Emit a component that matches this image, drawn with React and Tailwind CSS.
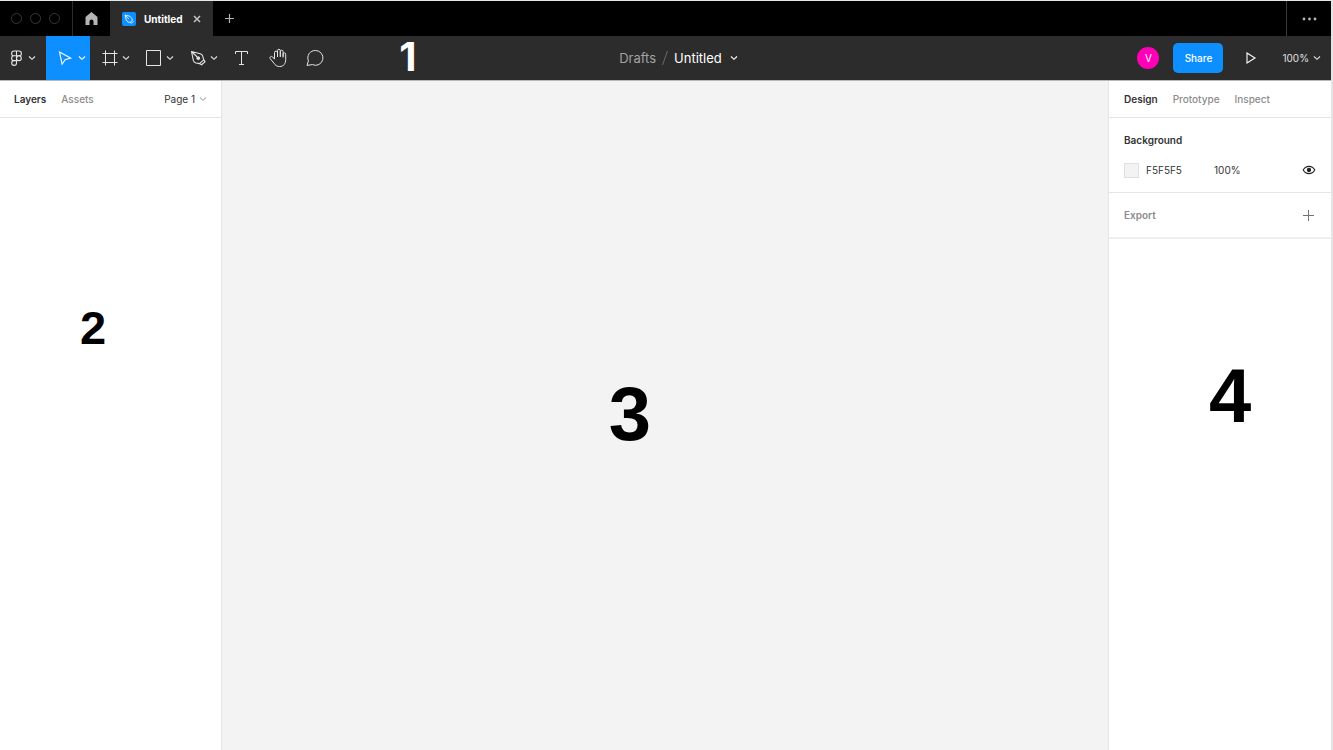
import React from "react";

function Chevron({ className = "" }) {
  return (
    <svg width="8" height="8" viewBox="0 0 8 8" fill="none" stroke="currentColor" strokeWidth="1.1" className={"shrink-0 " + className} aria-hidden="true">
      <path d="M1 2.500 4 5.300 7 2.500" />
    </svg>
  );
}

function Icon({ children }) {
  return (
    <svg width="20" height="20" viewBox="0 0 20 20" fill="none" stroke="currentColor" strokeWidth="1" strokeLinejoin="round" className="shrink-0" aria-hidden="true">
      {children}
    </svg>
  );
}

const icons = {
  figma: (
    <Icon>
      <path d="M10.500 3H8a2.400 2.400 0 0 0 0 4.800h2.500zM10.500 3H13a2.400 2.400 0 0 1 0 4.800h-2.500zM10.500 7.800H8a2.400 2.400 0 0 0 0 4.800h2.500zM10.500 12.600H8a2.400 2.400 0 1 0 2.500 2.400z" strokeWidth="1.100" />
      <circle cx="12.900" cy="10.200" r="2.400" strokeWidth="1.100" />
    </Icon>
  ),
  move: (
    <Icon>
      <path d="m4.500 4 11.200 6-5.600 1.600-3 4.600z" strokeWidth="1.100" strokeLinejoin="miter" />
    </Icon>
  ),
  frame: (
    <Icon>
      <path d="M6.500 2.500v15M15.500 2.500v15M3.500 5.500h15M3.500 14.500h15" />
    </Icon>
  ),
  rectangle: (
    <Icon>
      <path d="M3.500 2.500h14v15h-14z" strokeLinejoin="miter" />
    </Icon>
  ),
  pen: (
    <Icon>
      <path d="m4.500 3.500 8.700 2.300c1.500.4 2.300 1.300 2.600 2.600l.9 3.400-4.200 3.800-3.600-.6c-1.300-.3-2.100-1.100-2.500-2.300zM4.500 3.500l5.700 5.500" strokeWidth="1.100" />
      <path d="m16.700 11.800 1.400 1.800-3.500 3.200-2.100-1.200" strokeWidth="1.200" />
      <circle cx="11.300" cy="10.200" r="1.400" fill="currentColor" />
    </Icon>
  ),
  text: (
    <Icon>
      <path d="M4.500 6V3.500h12V6M10.500 3.500v13M8 16.500h5" />
    </Icon>
  ),
  hand: (
    <Icon>
      <path d="M6.500 11V4.600a1.500 1.500 0 0 1 3 0V9M9.500 8.500V2.700a1.400 1.400 0 0 1 2.800 0V9M12.300 8.500V3.600a1.400 1.400 0 0 1 2.800 0V9.500M15.100 8.500V6.200a1.300 1.300 0 0 1 2.600 0v5.300c0 4.300-2.200 7-6 7-2.800 0-4.400-1.100-5.800-3.400l-3.700-4.400c-.6-.9-.2-1.800.5-2.100.8-.4 1.500-.1 2 .4L6.500 11.200" />
    </Icon>
  ),
  comment: (
    <Icon>
      <path d="M10.500 2.500a7.400 7.400 0 1 1-3.100 14.100l-5.400.8 1.400-4.600A7.400 7.400 0 0 1 10.500 2.500z" strokeLinejoin="miter" />
    </Icon>
  ),
};

function Tool({ icon, label, active }) {
  return (
    <button
      type="button"
      aria-label={label}
      aria-pressed={active}
      className={
        "flex h-full w-11 items-center gap-[3px] pl-[9px] " +
        (active ? "bg-[#0d8fff] text-white" : "text-[#e5e5e5]")
      }
    >
      {icons[icon]}
      <Chevron />
    </button>
  );
}

function PlainTool({ icon, label }) {
  return (
    <button type="button" aria-label={label} className="flex h-full w-[37px] items-center justify-center text-[#e5e5e5]">
      {icons[icon]}
    </button>
  );
}

function TitleBar() {
  return (
    <header className="flex h-[35px] bg-black text-[#b5b5b5]">
      <div className="flex w-[73px] items-center gap-2 border-r border-[#2c2c2c] pl-[11px]">
        <span className="size-[11px] rounded-full border border-[#383838]" />
        <span className="size-[11px] rounded-full border border-[#383838]" />
        <span className="size-[11px] rounded-full border border-[#383838]" />
      </div>
      <button type="button" aria-label="Home" className="flex w-[37px] items-center justify-center">
        <svg width="13" height="13" viewBox="0 0 13 13" fill="currentColor" aria-hidden="true">
          <path d="M6.500 0 12.500 5v8H8.500V9.500a2 2 0 0 0-4 0V13h-4V5z" />
        </svg>
      </button>
      <div className="flex w-[103px] items-center bg-[#2c2c2c] pl-3 text-white">
        <svg width="14" height="14" viewBox="0 0 14 14" className="shrink-0" aria-hidden="true">
          <rect width="14" height="14" rx="2" fill="#0d8fff" />
          <path d="m3 3 5 1.300 2 2.400.2 1.800-2 1.900-2.400-.4-1.500-2zM3 3l3.800 4M10.200 8.500l1 1-1.800 1.800-1.200-.9" fill="none" stroke="#d9eeff" strokeWidth="1" />
        </svg>
        <span className="ml-2 font-bold">Untitled</span>
        <button type="button" aria-label="Close tab" className="ml-1.5 p-1">
          <svg width="8" height="8" viewBox="0 0 8 8" stroke="#c4c4c4" strokeWidth="1.500" aria-hidden="true">
            <path d="m1 1 6 6M7 1 1 7" />
          </svg>
        </button>
      </div>
      <button type="button" aria-label="New tab" className="flex w-8 items-center justify-center">
        <svg width="9" height="9" viewBox="0 0 9 9" stroke="currentColor" strokeWidth="1.200" aria-hidden="true">
          <path d="M4.500 0v9M0 4.500h9" />
        </svg>
      </button>
      <button type="button" aria-label="More options" className="ml-auto flex w-[45px] items-center justify-center border-l border-[#3a3a3a]">
        <svg width="15" height="4" viewBox="0 0 15 4" fill="currentColor" aria-hidden="true">
          <circle cx="2" cy="2" r="1.400" />
          <circle cx="7.500" cy="2" r="1.400" />
          <circle cx="13" cy="2" r="1.400" />
        </svg>
      </button>
    </header>
  );
}

function Toolbar() {
  return (
    <div className="relative grid h-[45px] grid-cols-[1fr_auto_1fr] border-b border-[#b8b8b8] bg-[#2c2c2c]">
      <div className="flex">
        <button type="button" aria-label="Main menu" className="flex w-[46px] items-center gap-0.5 pl-1.5 text-[#e5e5e5]">
          {icons.figma}
          <Chevron />
        </button>
        <Tool icon="move" label="Move" active />
        <Tool icon="frame" label="Frame" />
        <Tool icon="rectangle" label="Rectangle" />
        <Tool icon="pen" label="Pen" />
        <PlainTool icon="text" label="Text" />
        <PlainTool icon="hand" label="Hand" />
        <PlainTool icon="comment" label="Comment" />
      </div>
      <div className="flex items-center pl-[26px] text-[13px] text-[#a3a3a3]">
        <a href="#drafts">Drafts</a>
        <svg width="6" height="16" viewBox="0 0 6 16" stroke="#6b6b6b" className="mx-1.5" aria-hidden="true">
          <path d="M5.500 1 .5 15" />
        </svg>
        <button type="button" className="flex items-center gap-2 text-white">
          Untitled
          <Chevron />
        </button>
      </div>
      <div className="flex items-center justify-end pr-2.5 text-white">
        <span className="mr-3.5 flex size-[22px] items-center justify-center rounded-full bg-[#ff00b8]">V</span>
        <button type="button" className="h-[30px] w-[50px] rounded-[5px] bg-[#0d8fff] font-medium">
          Share
        </button>
        <button type="button" aria-label="Present" className="ml-[18px] p-1">
          <svg width="12" height="12" viewBox="0 0 12 12" fill="none" stroke="currentColor" strokeWidth="1.100" aria-hidden="true">
            <path d="M2 1v10l8-5z" />
          </svg>
        </button>
        <button type="button" className="ml-[21px] flex items-center gap-1 text-[#e0e0e0]">
          100%
          <Chevron />
        </button>
      </div>
      <span className="absolute top-1/2 left-[30%] -translate-y-1/2 pb-0.5 font-['Inter',sans-serif] text-[40px] leading-none font-bold text-white">
        1
      </span>
    </div>
  );
}

function LayersPanel() {
  return (
    <aside className="flex w-[222px] flex-col border-r border-[#e5e5e5] bg-white">
      <div className="flex h-[37px] items-center gap-[15px] border-b border-[#e5e5e5] px-3.5">
        <button type="button" className="font-semibold">Layers</button>
        <button type="button" className="font-medium text-[#8c8c8c]">Assets</button>
        <button type="button" className="ml-auto flex items-center gap-1">
          Page 1
          <Chevron className="text-[#b3b3b3]" />
        </button>
      </div>
      <span className="pt-[186px] pl-20 font-['Liberation_Sans',sans-serif] text-[47px] leading-none font-bold text-black">2</span>
    </aside>
  );
}

function DesignPanel() {
  return (
    <aside className="flex w-[223px] flex-col border-l border-[#e5e5e5] bg-white">
      <div className="flex h-[37px] items-center gap-[15px] border-b border-[#e5e5e5] px-[15px]">
        <button type="button" className="font-semibold">Design</button>
        <button type="button" className="font-medium text-[#8c8c8c]">Prototype</button>
        <button type="button" className="font-medium text-[#8c8c8c]">Inspect</button>
      </div>
      <section className="h-[75px] border-b border-[#e5e5e5] px-[15px] pt-3.5">
        <h2 className="font-semibold">Background</h2>
        <div className="mt-3.5 flex items-center">
          <span className="size-[15px] border border-[#e0e0e0] bg-[#f3f3f3]" />
          <input aria-label="Background colour" defaultValue="F5F5F5" className="ml-[7px] w-[68px] outline-none" />
          <input aria-label="Background opacity" defaultValue="100%" className="w-12 outline-none" />
          <button type="button" aria-label="Toggle visibility" className="ml-auto">
            <svg width="14" height="10" viewBox="0 0 14 10" fill="none" stroke="#222222" strokeWidth="1.100" aria-hidden="true">
              <path d="M1.200 5C4 .2 10 .2 12.800 5 10 9.800 4 9.800 1.200 5z" />
              <circle cx="7" cy="5" r="1.600" fill="#222222" />
            </svg>
          </button>
        </div>
      </section>
      <section className="flex h-[46px] items-center justify-between border-b-2 border-[#efefef] pr-[17px] pl-[15px]">
        <h2 className="font-semibold text-[#8c8c8c]">Export</h2>
        <button type="button" aria-label="Add export">
          <svg width="11" height="11" viewBox="0 0 11 11" stroke="#737373" aria-hidden="true">
            <path d="M5.500 0v11M0 5.500h11" />
          </svg>
        </button>
      </section>
      <span className="pt-[119px] pl-[100px] font-['Liberation_Sans',sans-serif] text-[76px] leading-none font-bold text-black">4</span>
    </aside>
  );
}

export default function App() {
  return (
    <div className="flex min-h-screen flex-col border-t border-r-2 border-t-[#e3e8e5] border-r-[#e5e5e5] font-['Inter',sans-serif] text-[10px] leading-4 text-[#333333]">
      <TitleBar />
      <Toolbar />
      <div className="flex flex-1">
        <LayersPanel />
        <main className="flex flex-1 items-center justify-center bg-[#f3f3f3] pr-[70px] pb-1">
          <span className="font-['Liberation_Sans',sans-serif] text-[76px] leading-none font-bold text-black">3</span>
        </main>
        <DesignPanel />
      </div>
    </div>
  );
}
